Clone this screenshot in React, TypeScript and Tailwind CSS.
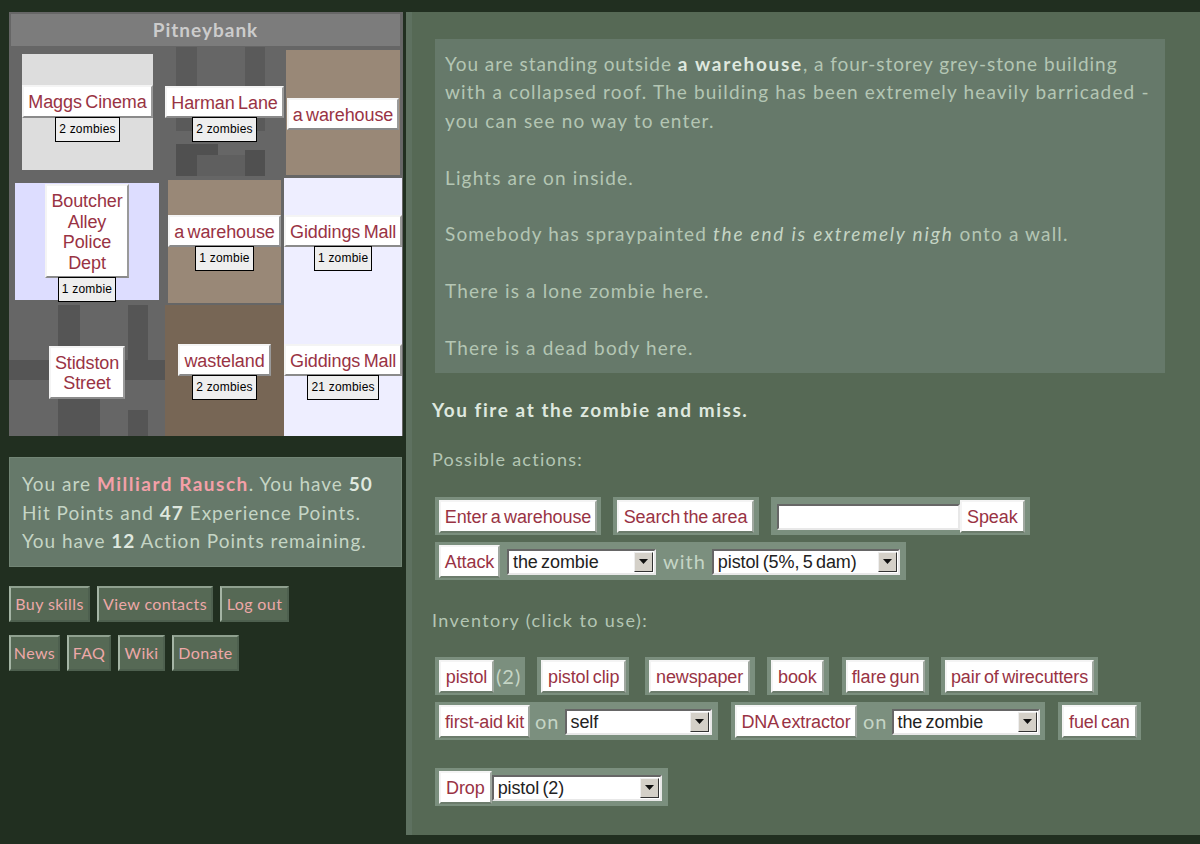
const bodyFont = "font-['Lato','Open_Sans',sans-serif]";
const btnFont = "font-['Liberation_Sans',Arial,sans-serif]";

type MapCell = {
  label: string[];
  zombies?: string;
  pad: string;
  bg: string;
  street?: 'upper' | 'lower';
};

const cells: MapCell[] = [
  { label: ['Maggs Cinema'], zombies: '2 zombies', pad: 'pl-[13px] pt-[7px] pr-[12px] pb-[8px]', bg: 'bg-[#dddddd]' },
  { label: ['Harman Lane'], zombies: '2 zombies', pad: '', bg: 'bg-[#666666]', street: 'upper' },
  { label: ['a warehouse'], pad: 'pl-[2px] pt-[3px] pr-[3px] pb-[3px]', bg: 'bg-[#998877]' },
  { label: ['Boutcher', 'Alley', 'Police', 'Dept'], zombies: '1 zombie', pad: 'p-[5px] px-[6px]', bg: 'bg-[#ddddff]' },
  { label: ['a warehouse'], zombies: '1 zombie', pad: 'p-[2px] px-[3px]', bg: 'bg-[#998877]' },
  { label: ['Giddings Mall'], zombies: '1 zombie', pad: 'pr-[1px]', bg: 'bg-[#eeeeff]' },
  { label: ['Stidston', 'Street'], pad: '', bg: 'bg-[#666666]', street: 'lower' },
  { label: ['wasteland'], zombies: '2 zombies', pad: '', bg: 'bg-[#776655]' },
  { label: ['Giddings Mall'], zombies: '21 zombies', pad: 'pr-[1px]', bg: 'bg-[#eeeeff]' },
];

function StreetTexture({ kind }: { kind: 'upper' | 'lower' }) {
  if (kind === 'upper') {
    return (
      <svg className="absolute inset-0 h-full w-full" viewBox="0 0 119 131" aria-hidden="true">
        <rect x="11" y="0" width="21" height="84" fill="#5a5a5a" />
        <rect x="80" y="0" width="20" height="84" fill="#5a5a5a" />
        <rect x="11" y="97" width="42" height="32" fill="#505050" />
        <rect x="32" y="108" width="48" height="21" fill="#5f5f5f" />
        <rect x="80" y="103" width="20" height="26" fill="#505050" />
      </svg>
    );
  }
  return (
    <svg className="absolute inset-0 h-full w-full" viewBox="0 0 156 131" aria-hidden="true">
      <rect x="0" y="55" width="156" height="20" fill="#555555" />
      <rect x="49" y="0" width="22" height="55" fill="#555555" />
      <rect x="119" y="0" width="20" height="75" fill="#555555" />
      <rect x="49" y="93" width="42" height="38" fill="#555555" />
      <rect x="119" y="105" width="20" height="26" fill="#555555" />
    </svg>
  );
}

function MapButton({ lines }: { lines: string[] }) {
  return (
    <div
      className={`${btnFont} relative z-10 border-2 border-t-[#f4f4f4] border-l-[#f4f4f4] border-r-[#9a9a9a] border-b-[#8a8a8a] bg-white px-[4px] pb-[3px] pt-[5px] text-center text-[18px] leading-[20.5px] tracking-[-0.1px] text-[#993344] [word-spacing:-1.5px]`}
    >
      {lines.map((line) => (
        <div key={line} className="whitespace-nowrap">
          {line}
        </div>
      ))}
    </div>
  );
}

function Cell({ cell }: { cell: MapCell }) {
  return (
    <div className={`flex min-w-0 ${cell.pad}`}>
      <div className={`relative flex flex-1 flex-col items-center justify-center pt-[3px] ${cell.bg}`}>
        {cell.street && <StreetTexture kind={cell.street} />}
        <MapButton lines={cell.label} />
        {cell.zombies && (
          <div
            className={`${btnFont} relative z-10 -mt-[1px] border border-black bg-[#eeeeee] px-[3px] text-[12px] leading-[23px] tracking-[0.2px] text-black`}
          >
            {cell.zombies}
          </div>
        )}
      </div>
    </div>
  );
}

function Btn({ children, className = '' }: { children: React.ReactNode; className?: string }) {
  return (
    <span
      className={`${btnFont} inline-flex h-[33px] shrink-0 items-center justify-center whitespace-nowrap border-2 border-t-[#f4f4f4] border-l-[#f4f4f4] border-r-[#a0a8a0] border-b-[#6c7c6c] bg-white px-[5px] pt-[2px] text-[18px] tracking-[-0.1px] text-[#993344] [word-spacing:-1.5px] ${className}`}
    >
      {children}
    </span>
  );
}

function Pick({ value, width }: { value: string; width: string }) {
  return (
    <span
      className={`${btnFont} mt-[1px] flex h-[26px] shrink-0 items-center justify-between border-2 border-t-[#666666] border-l-[#666666] border-r-[#e8e8e8] border-b-[#e8e8e8] bg-white pl-[4px] pr-[1px] text-[18px] tracking-[-0.1px] text-[#222222] [word-spacing:-1.5px] ${width}`}
    >
      <span className="whitespace-nowrap pt-[2px]">{value}</span>
      <span className="flex h-[20px] w-[19px] items-center justify-center border border-t-[#eeeeee] border-l-[#eeeeee] border-r-[#333333] border-b-[#333333] bg-[#d4d0c8]">
        <svg width="9" height="5" viewBox="0 0 9 5" aria-hidden="true">
          <path d="M0 0h9L4.5 5z" fill="#111111" />
        </svg>
      </span>
    </span>
  );
}

function Pill({ width, children }: { width: string; children: React.ReactNode }) {
  return (
    <div className={`flex h-[38px] shrink-0 items-center bg-[#7b8f7e] pl-[4px] ${width}`}>{children}</div>
  );
}

function Word({ children, className = '' }: { children: React.ReactNode; className?: string }) {
  return <span className={`${bodyFont} text-[20px] tracking-[1px] text-[#c5d5c5] ${className}`}>{children}</span>;
}

function NavLink({ label, width }: { label: string; width: string }) {
  return (
    <span
      className={`${bodyFont} flex h-[36px] items-center justify-center border-2 border-t-[#8fa08f] border-l-[#a5b5a5] border-r-[#4e604f] border-b-[#4e604f] bg-[#566955] text-[16px] tracking-[0.4px] text-[#eda8a8] ${width}`}
    >
      {label}
    </span>
  );
}

export default function App() {
  return (
    <div className="flex h-[844px] w-[1200px] overflow-hidden bg-[#212f20] pl-[9px] pt-[12px]">
      {/* left column: map, status, links */}
      <div className="w-[394px] shrink-0">
        <div className="border-t-[2px] border-[#666666] bg-[#666666]">
          <div
            className={`${bodyFont} mx-[2px] flex h-[32px] w-[389px] items-center justify-center bg-[#7c7c7c] text-[19px] font-bold tracking-[1px] text-[#cccccc]`}
          >
            Pitneybank
          </div>
          <div className="mt-[1px] grid h-[389px] grid-cols-[156px_119px_119px] grid-rows-[131px_127px_131px]">
            {cells.map((cell, i) => (
              <Cell key={i} cell={cell} />
            ))}
          </div>
        </div>

        <div
          className={`${bodyFont} mt-[21px] h-[110px] w-[393px] border border-[#728575] bg-[#66796a] px-[12px] py-[12px] text-[19px] leading-[28.5px] tracking-[1px] text-[#c5d5c5]`}
        >
          You are <b className="tracking-[1.5px] text-[#f4a0a8]">Milliard Rausch</b>. You have{' '}
          <b className="text-[#dfe8df]">50</b> Hit Points and <b className="text-[#dfe8df]">47</b> Experience Points.
          You have <b className="text-[#dfe8df]">12</b> Action Points remaining.
        </div>

        <div className="mt-[19px] flex gap-[7px]">
          <NavLink label="Buy skills" width="w-[81px]" />
          <NavLink label="View contacts" width="w-[116px]" />
          <NavLink label="Log out" width="w-[69px]" />
        </div>
        <div className="mt-[13px] flex gap-[7px]">
          <NavLink label="News" width="w-[51px]" />
          <NavLink label="FAQ" width="w-[44px]" />
          <NavLink label="Wiki" width="w-[47px]" />
          <NavLink label="Donate" width="w-[67px]" />
        </div>
      </div>

      {/* main panel */}
      <div className="ml-[3px] h-[823px] flex-1 border-l-[6px] border-[#5e7160] bg-[#566955] pl-[23px] pt-[27px]">
        <div
          className={`${bodyFont} h-[334px] w-[730px] bg-[#66796a] px-[10px] pt-[11px] text-[19px] leading-[28.4px] tracking-[1.15px] text-[#b4c6b4]`}
        >
          <p className="first-line:tracking-[0.95px]">
            You are standing outside <b className="tracking-[1.7px] text-[#dfe8df]">a warehouse</b>, a four-storey
            grey-stone building
            <br />
            with a collapsed roof. The building has been extremely heavily barricaded -
            <br />
            you can see no way to enter.
          </p>
          <p className="mt-[28.4px]">Lights are on inside.</p>
          <p className="mt-[28.4px]">
            Somebody has spraypainted <i className="tracking-[1.8px] text-[#c5d5c5]">the end is extremely nigh</i> onto
            a wall.
          </p>
          <p className="mt-[28.4px]">There is a lone zombie here.</p>
          <p className="mt-[28.4px]">There is a dead body here.</p>
        </div>

        <p
          className={`${bodyFont} -ml-[3px] mt-[23px] text-[19px] font-bold leading-[28px] tracking-[1.55px] text-[#dfe8df]`}
        >
          You fire at the zombie and miss.
        </p>
        <p className={`${bodyFont} -ml-[3px] mt-[21px] text-[18px] leading-[28px] tracking-[1.25px] text-[#b4c6b4]`}>
          Possible actions:
        </p>

        <div className="mt-[24px] flex gap-[12px]">
          <Pill width="w-[166px]">
            <Btn className="w-[158px]">Enter a warehouse</Btn>
          </Pill>
          <Pill width="w-[146px]">
            <Btn className="w-[137px]">Search the area</Btn>
          </Pill>
          <Pill width="w-[259px]">
            <span className="ml-[2px] mt-[1px] h-[26px] w-[183px] border-2 border-t-[#666666] border-l-[#666666] border-r-[#e8e8e8] border-b-[#e8e8e8] bg-white" />
            <Btn>Speak</Btn>
          </Pill>
        </div>
        <div className="mt-[7px] flex">
          <Pill width="w-[471px]">
            <Btn className="w-[61px]">Attack</Btn>
            <span className="ml-[7px]">
              <Pick value="the zombie" width="w-[149px]" />
            </span>
            <Word className="ml-[7px] mr-[6px]">with</Word>
            <Pick value="pistol (5%, 5 dam)" width="w-[188px]" />
          </Pill>
        </div>

        <p className={`${bodyFont} -ml-[3px] mt-[26px] text-[18px] leading-[28px] tracking-[1.4px] text-[#b4c6b4]`}>
          Inventory (click to use):
        </p>

        <div className="mt-[23px] flex gap-[12px]">
          <Pill width="w-[90px]">
            <Btn className="w-[55px]">pistol</Btn>
            <Word className="ml-[2px]">(2)</Word>
          </Pill>
          <Pill width="w-[92px]">
            <Btn>pistol clip</Btn>
          </Pill>
          <div className="ml-[4px]">
            <Pill width="w-[110px]">
              <Btn>newspaper</Btn>
            </Pill>
          </div>
          <Pill width="w-[62px]">
            <Btn>book</Btn>
          </Pill>
          <div className="ml-[1px]">
            <Pill width="w-[87px]">
              <Btn className="w-[79px]">flare gun</Btn>
            </Pill>
          </div>
          <Pill width="w-[157px]">
            <Btn className="w-[149px]">pair of wirecutters</Btn>
          </Pill>
        </div>
        <div className="mt-[7px] flex gap-[13px]">
          <Pill width="w-[283px]">
            <Btn className="w-[91px]">first-aid kit</Btn>
            <Word className="ml-[5px] mr-[5px]">on</Word>
            <Pick value="self" width="w-[147px]" />
          </Pill>
          <Pill width="w-[314px]">
            <Btn className="w-[122px]">DNA extractor</Btn>
            <Word className="ml-[6px] mr-[4px]">on</Word>
            <Pick value="the zombie" width="w-[148px]" />
          </Pill>
          <Pill width="w-[83px]">
            <Btn>fuel can</Btn>
          </Pill>
        </div>
        <div className="mt-[28px] flex">
          <Pill width="w-[233px]">
            <Btn>Drop</Btn>
            <Pick value="pistol (2)" width="w-[170px]" />
          </Pill>
        </div>
      </div>
    </div>
  );
}
